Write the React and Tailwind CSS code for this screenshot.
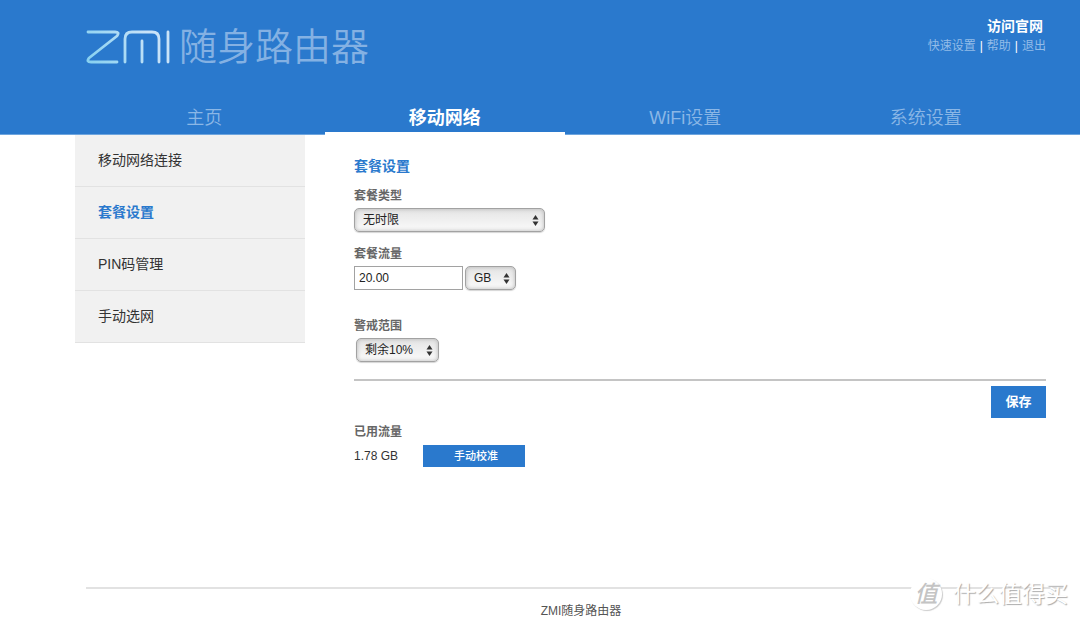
import React, { useState } from 'react';

const navItems = ['主页', '移动网络', 'WiFi设置', '系统设置'];
const menuItems = ['移动网络连接', '套餐设置', 'PIN码管理', '手动选网'];

function Logo() {
  return (
    <div className="flex items-center gap-2">
      <svg width="85" height="36" viewBox="0 0 85 36" fill="none" strokeWidth="2.8" strokeLinecap="round" strokeLinejoin="round" aria-label="ZMI">
        <defs>
          <linearGradient id="zmi" gradientUnits="userSpaceOnUse" x1="0" y1="34" x2="60" y2="0">
            <stop offset="0" stopColor="#84d0f0" />
            <stop offset="1" stopColor="#c9e3f8" />
          </linearGradient>
        </defs>
        <g stroke="url(#zmi)">
          <path d="M2 3H29Q34 3 31 7L3 29Q0 33 5 33H31" />
          <path d="M39 33V10Q39 3 46 3H66Q73 3 73 10V33" />
          <path d="M56 12V33" />
        </g>
        <path d="M82 3V33" stroke="#c9e3f8" />
      </svg>
      <span className="text-[38px] leading-[48px] font-[350] text-[#84b1e3]">随身路由器</span>
    </div>
  );
}

function Header() {
  return (
    <header className="border-b border-[#6ea5de] bg-[#2a79cd]">
      <div className="flex h-[98px] items-start justify-between pr-[34px] pl-[86px]">
        <div className="pt-[23px]">
          <Logo />
        </div>
        <div className="flex flex-col items-end pt-[16px]">
          <a href="#site" className="mr-[3px] text-sm leading-5 font-bold text-white">访问官网</a>
          <div className="flex gap-1 text-xs leading-5 text-[#93bce8]">
            <a href="#quick">快速设置</a>
            <span className="text-white">|</span>
            <a href="#help">帮助</a>
            <span className="text-white">|</span>
            <a href="#logout">退出</a>
          </div>
        </div>
      </div>
      <nav className="grid grid-cols-4 pr-[34px] pl-[84px] text-center text-lg">
        {navItems.map((item) => (
          <a
            key={item}
            href="#nav"
            className={item === '移动网络' ? '-mb-px h-[37px] border-b-3 border-white pt-1 leading-8 font-bold text-white' : 'h-9 pt-1 leading-8 font-[350] text-[#8bb7e6]'}
          >
            {item}
          </a>
        ))}
      </nav>
    </header>
  );
}

function Sidebar() {
  return (
    <aside className="w-[230px] shrink-0">
      <ul>
        {menuItems.map((item) => (
          <li key={item} className="border-b border-[#e2e2e2] bg-[#f1f1f1]">
            <a
              href="#menu"
              className={item === '套餐设置' ? 'block h-[51px] pl-[23px] text-sm leading-[51px] font-bold text-[#2a79cd]' : 'block h-[51px] pl-[23px] text-sm leading-[51px] text-[#333]'}
            >
              {item}
            </a>
          </li>
        ))}
      </ul>
    </aside>
  );
}

function Select({ id, label, options, className }) {
  return (
    <div className={`relative h-6 ${className}`}>
      <select
        id={id}
        aria-label={label}
        className="block h-6 w-full appearance-none rounded-[5px] border border-[#a2a2a2] bg-linear-to-b from-[#e4e4e4] to-[#fbfbfb] pl-2 text-xs text-[#222] shadow-[inset_0_0_4px_#b5b5b5,0_1px_1px_#d5d5d5]"
      >
        {options.map((o) => (
          <option key={o}>{o}</option>
        ))}
      </select>
      <svg className="pointer-events-none absolute top-[7px] right-[6px]" width="7" height="11" viewBox="0 0 7 11" fill="#333">
        <path d="M3.5 0L6.5 4.5H0.5Z" />
        <path d="M3.5 11L6.5 6.5H0.5Z" />
      </svg>
    </div>
  );
}

function PlanForm() {
  const [amount, setAmount] = useState('20.00');

  return (
    <main className="min-w-0 flex-1 pt-[21px]">
      <h1 className="text-sm leading-5 font-bold text-[#2a79cd]">套餐设置</h1>

      <label htmlFor="type" className="mt-2 block text-xs leading-6 font-bold text-[#666]">套餐类型</label>
      <Select id="type" options={['无时限', '按月']} className="w-[191px]" />

      <label htmlFor="amount" className="mt-[10px] block text-xs leading-6 font-bold text-[#666]">套餐流量</label>
      <div className="flex gap-[2px]">
        <input
          id="amount"
          type="text"
          value={amount}
          onChange={(e) => setAmount(e.target.value)}
          className="h-6 w-[109px] border border-[#a2a2a2] bg-white px-1 text-xs text-[#222]"
        />
        <Select id="unit" label="单位" options={['GB', 'MB']} className="w-[51px]" />
      </div>

      <label htmlFor="warn" className="mt-6 block text-xs leading-6 font-bold text-[#666]">警戒范围</label>
      <Select id="warn" options={['剩余10%', '剩余20%']} className="ml-[2px] w-[83px]" />

      <div className="mt-[17px] flex justify-end border-t-2 border-[#c4c4c4] pt-[5px]">
        <button type="button" className="h-8 w-[55px] bg-[#2a79cd] text-[13px] font-bold text-white">保存</button>
      </div>

      <h2 className="mt-[2px] text-xs leading-6 font-bold text-[#666]">已用流量</h2>
      <div className="mt-px flex items-center gap-6">
        <span className="w-[45px] text-xs leading-[22px] whitespace-nowrap text-[#333]">1.78 GB</span>
        <button type="button" className="h-[22px] w-[102px] bg-[#2a79cd] pl-1 text-[11px] font-medium text-white">手动校准</button>
      </div>
    </main>
  );
}

// semi-transparent mark over the bottom right corner
function Watermark() {
  return (
    <div className="pointer-events-none absolute right-[12px] bottom-[10px] flex items-center gap-[11px]">
      <span className="flex size-8 items-center justify-center rounded-full bg-white text-[23px] leading-8 font-medium text-[#c4c4c4] italic shadow-[1px_1px_1px_#ccc]">值</span>
      <span className="text-[23px] leading-8 text-white [text-shadow:1px_1px_1px_#aaa]">什么值得买</span>
    </div>
  );
}

function App() {
  return (
    <div className="relative flex min-h-screen flex-col bg-white font-['Liberation_Sans','Noto_Sans_CJK_SC',sans-serif]">
      <Header />
      <div className="flex flex-1 gap-[49px] pr-[34px] pl-[75px]">
        <Sidebar />
        <PlanForm />
      </div>
      <footer className="mr-[14px] ml-[86px] border-t-2 border-[#e2e2e2] pt-[14px] pb-[1px] pl-[10px] text-center text-xs leading-4 text-[#555]">
        ZMI随身路由器
      </footer>
      <Watermark />
    </div>
  );
}

export default App;
